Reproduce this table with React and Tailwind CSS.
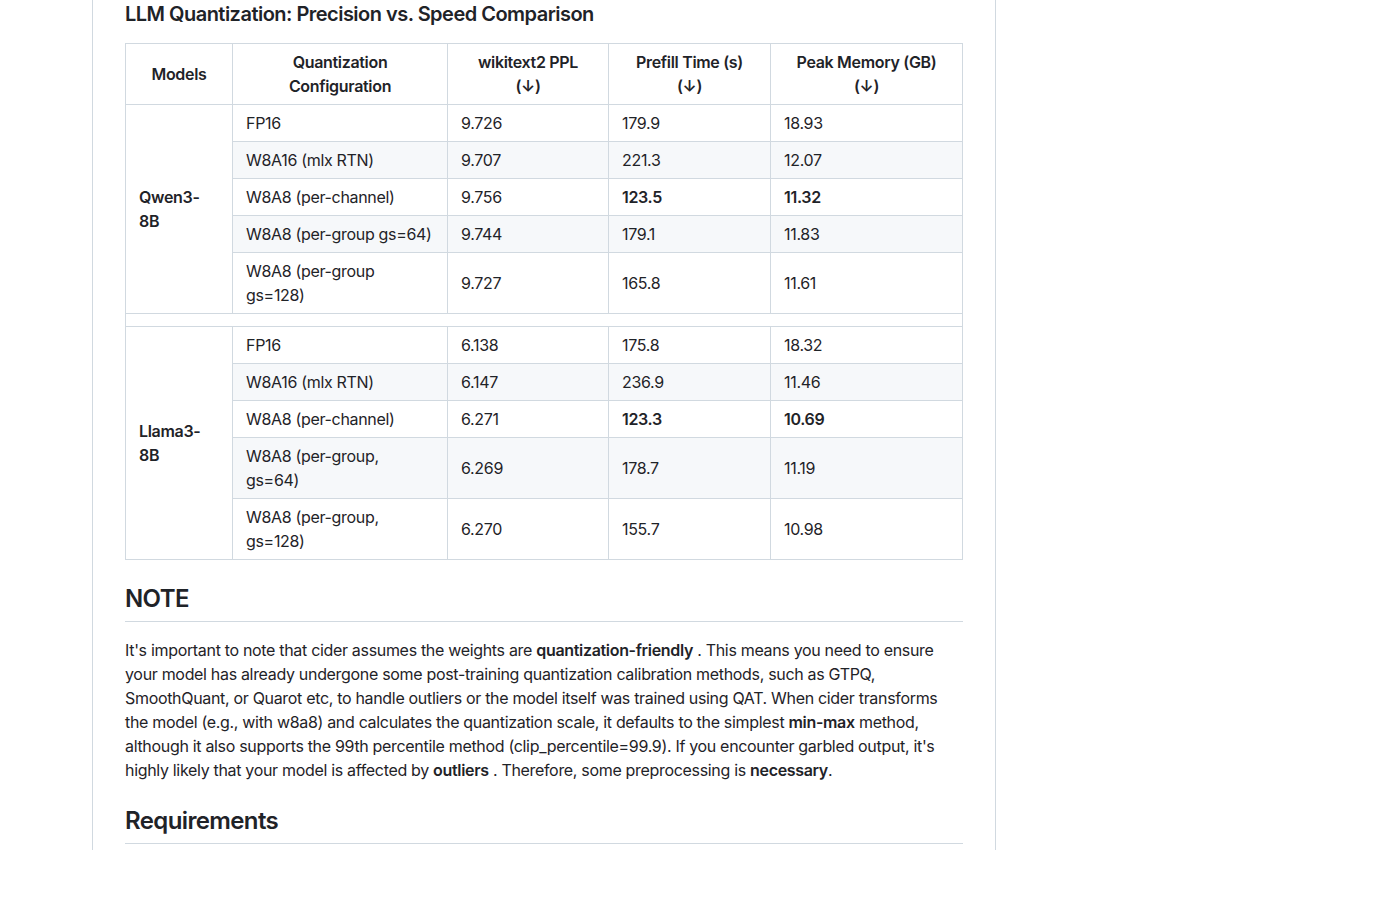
import React from 'react';

const qwenRows = [
  { cfg: 'FP16', ppl: '9.726', time: '179.9', mem: '18.93' },
  { cfg: 'W8A16 (mlx RTN)', ppl: '9.707', time: '221.3', mem: '12.07' },
  { cfg: 'W8A8 (per-channel)', ppl: '9.756', time: '123.5', mem: '11.32', best: true },
  { cfg: 'W8A8 (per-group gs=64)', ppl: '9.744', time: '179.1', mem: '11.83', nowrap: true },
  { cfg: ['W8A8 (per-group', 'gs=128)'], ppl: '9.727', time: '165.8', mem: '11.61' },
];

const llamaRows = [
  { cfg: 'FP16', ppl: '6.138', time: '175.8', mem: '18.32' },
  { cfg: 'W8A16 (mlx RTN)', ppl: '6.147', time: '236.9', mem: '11.46' },
  { cfg: 'W8A8 (per-channel)', ppl: '6.271', time: '123.3', mem: '10.69', best: true },
  { cfg: ['W8A8 (per-group,', 'gs=64)'], ppl: '6.269', time: '178.7', mem: '11.19' },
  { cfg: ['W8A8 (per-group,', 'gs=128)'], ppl: '6.270', time: '155.7', mem: '10.98' },
];

const cell = 'border border-[#d1d9e0] px-[13px] py-[6px] align-middle';

const Cfg = ({ cfg }) =>
  Array.isArray(cfg) ? (
    <>
      {cfg[0]}
      <br />
      {cfg[1]}
    </>
  ) : (
    cfg
  );

// one model block: first row carries the rowspan'd model name
const ModelRows = ({ name, rows }) =>
  rows.map((r, i) => (
    <tr key={name + i} className={i % 2 === 1 ? 'bg-[#f6f8fa]' : 'bg-white'}>
      {i === 0 && (
        <td rowSpan={rows.length} className={`${cell} bg-white font-semibold`}>
          {name[0]}
          <br />
          {name[1]}
        </td>
      )}
      <td className={`${cell} ${r.nowrap ? 'whitespace-nowrap' : ''}`}>
        <Cfg cfg={r.cfg} />
      </td>
      <td className={cell}>{r.ppl}</td>
      <td className={`${cell} ${r.best ? 'font-semibold' : ''}`}>{r.time}</td>
      <td className={`${cell} ${r.best ? 'font-semibold' : ''}`}>{r.mem}</td>
    </tr>
  ));

export default function App() {
  return (
    <div
      className="min-h-[900px] bg-white text-[#1f2328] text-[16px] leading-6 tracking-[-0.02em]"
      style={{ fontFamily: 'Inter, "Liberation Sans", sans-serif' }}
    >
      <div className="ml-[92px] w-[904px] h-[850px] overflow-hidden border-x border-[#d1d9e0] px-[32px] pt-[2px]">
        {/* Section title */}
        <h3 className="text-[20px] leading-[25px] font-semibold tracking-[-0.026em] mb-4">
          LLM Quantization: Precision vs. Speed Comparison
        </h3>

        {/* Results table */}
        <table className="w-[837px] table-fixed border-collapse mb-4">
          <colgroup>
            <col className="w-[107px]" />
            <col className="w-[215px]" />
            <col className="w-[161px]" />
            <col className="w-[162px]" />
            <col className="w-[192px]" />
          </colgroup>
          <thead>
            <tr className="bg-white">
              <th className={`${cell} font-semibold text-center`}>Models</th>
              <th className={`${cell} font-semibold text-center`}>
                Quantization
                <br />
                Configuration
              </th>
              <th className={`${cell} font-semibold text-center`}>
                wikitext2 PPL
                <br />
                (↓)
              </th>
              <th className={`${cell} font-semibold text-center`}>
                Prefill Time (s)
                <br />
                (↓)
              </th>
              <th className={`${cell} font-semibold text-center`}>
                Peak Memory (GB)
                <br />
                (↓)
              </th>
            </tr>
          </thead>
          <tbody>
            <ModelRows name={['Qwen3-', '8B']} rows={qwenRows} />
            <tr className="bg-white">
              <td colSpan={5} className={`${cell} h-[13px] py-0`}></td>
            </tr>
            <ModelRows name={['Llama3-', '8B']} rows={llamaRows} />
          </tbody>
        </table>

        {/* NOTE */}
        <h2 className="mt-6 mb-4 pb-[7px] text-[24px] leading-[30px] font-semibold tracking-[-0.026em] border-b border-[#d1d9e0]">
          NOTE
        </h2>
        <p className="mb-4">
          It's important to note that cider assumes the weights are{' '}
          <strong className="font-semibold">quantization-friendly</strong> . This means you need to
          ensure
          <br />
          your model has already undergone some post-training quantization calibration methods, such
          as GTPQ,
          <br />
          SmoothQuant, or Quarot etc, to handle outliers or the model itself was trained using QAT.
          When cider transforms
          <br />
          the model (e.g., with w8a8) and calculates the quantization scale, it defaults to the
          simplest <strong className="font-semibold">min-max</strong> method,
          <br />
          although it also supports the 99th percentile method (clip_percentile=99.9). If you
          encounter garbled output, it's
          <br />
          highly likely that your model is affected by{' '}
          <strong className="font-semibold">outliers</strong> . Therefore, some preprocessing is{' '}
          <strong className="font-semibold">necessary</strong>.
        </p>

        {/* Requirements */}
        <h2 className="mt-6 mb-4 pb-[7px] text-[24px] leading-[30px] font-semibold tracking-[-0.026em] border-b border-[#d1d9e0]">
          Requirements
        </h2>
      </div>
    </div>
  );
}
